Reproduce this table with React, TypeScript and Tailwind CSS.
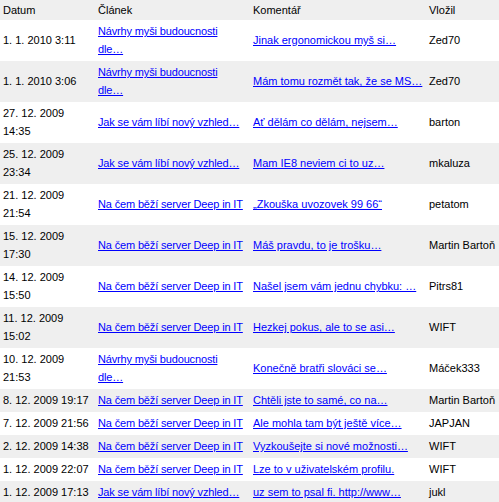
import React from "react";

const rows: [string, string, string, string][] = [
  ["1. 1. 2010 3:11", "Návrhy myši budoucnosti dle…", "Jinak ergonomickou myš si…", "Zed70"],
  ["1. 1. 2010 3:06", "Návrhy myši budoucnosti dle…", "Mám tomu rozmět tak, že se MS…", "Zed70"],
  ["27. 12. 2009 14:35", "Jak se vám líbí nový vzhled…", "Ať dělám co dělám, nejsem…", "barton"],
  ["25. 12. 2009 23:34", "Jak se vám líbí nový vzhled…", "Mam IE8 neviem ci to uz…", "mkaluza"],
  ["21. 12. 2009 21:54", "Na čem běží server Deep in IT", "„Zkouška uvozovek 99 66“", "petatom"],
  ["15. 12. 2009 17:30", "Na čem běží server Deep in IT", "Máš pravdu, to je trošku…", "Martin Bartoň"],
  ["14. 12. 2009 15:50", "Na čem běží server Deep in IT", "Našel jsem vám jednu chybku: …", "Pitrs81"],
  ["11. 12. 2009 15:02", "Na čem běží server Deep in IT", "Hezkej pokus, ale to se asi…", "WIFT"],
  ["10. 12. 2009 21:53", "Návrhy myši budoucnosti dle…", "Konečně bratři slováci se…", "Máček333"],
  ["8. 12. 2009 19:17", "Na čem běží server Deep in IT", "Chtěli jste to samé, co na…", "Martin Bartoň"],
  ["7. 12. 2009 21:56", "Na čem běží server Deep in IT", "Ale mohla tam být ještě více…", "JAPJAN"],
  ["2. 12. 2009 14:38", "Na čem běží server Deep in IT", "Vyzkoušejte si nové možnosti…", "WIFT"],
  ["1. 12. 2009 22:07", "Na čem běží server Deep in IT", "Lze to v uživatelském profilu.", "WIFT"],
  ["1. 12. 2009 17:13", "Jak se vám líbí nový vzhled…", "uz sem to psal fi. http://www…", "jukl"],
];

export default function App() {
  return (
    <div className="w-[499px] bg-white text-[11px] leading-[18px] text-black" style={{ fontFamily: '"Liberation Sans", Arial, sans-serif' }}>
      <table className="w-[499px] table-fixed border-collapse">
        <colgroup>
          <col className="w-[95px]" />
          <col className="w-[155px]" />
          <col className="w-[176px]" />
          <col className="w-[73px]" />
        </colgroup>
        <thead>
          <tr className="bg-[#efefef] h-[20px]">
            <th className="px-[3px] py-0 text-left font-normal align-middle">Datum</th>
            <th className="px-[3px] py-0 text-left font-normal align-middle">Článek</th>
            <th className="px-[3px] py-0 text-left font-normal align-middle">Komentář</th>
            <th className="px-[3px] py-0 text-left font-normal align-middle">Vložil</th>
          </tr>
        </thead>
        <tbody>
          {rows.map((r, i) => (
            <tr key={i} className={i % 2 === 1 ? "bg-[#efefef]" : "bg-white"}>
              <td className="px-[3px] pt-[2px] pb-[3px] align-middle">{r[0]}</td>
              <td className="pl-[3px] pr-[6px] pt-[2px] pb-[3px] align-middle tracking-[-0.15px]">
                <a href="#" className="text-[#0000ff] underline">{r[1]}</a>
              </td>
              <td className="px-[3px] pt-[2px] pb-[3px] align-middle">
                <a href="#" className="text-[#0000ff] underline">{r[2]}</a>
              </td>
              <td className="px-[3px] pt-[2px] pb-[3px] align-middle whitespace-nowrap">{r[3]}</td>
            </tr>
          ))}
        </tbody>
      </table>
    </div>
  );
}
